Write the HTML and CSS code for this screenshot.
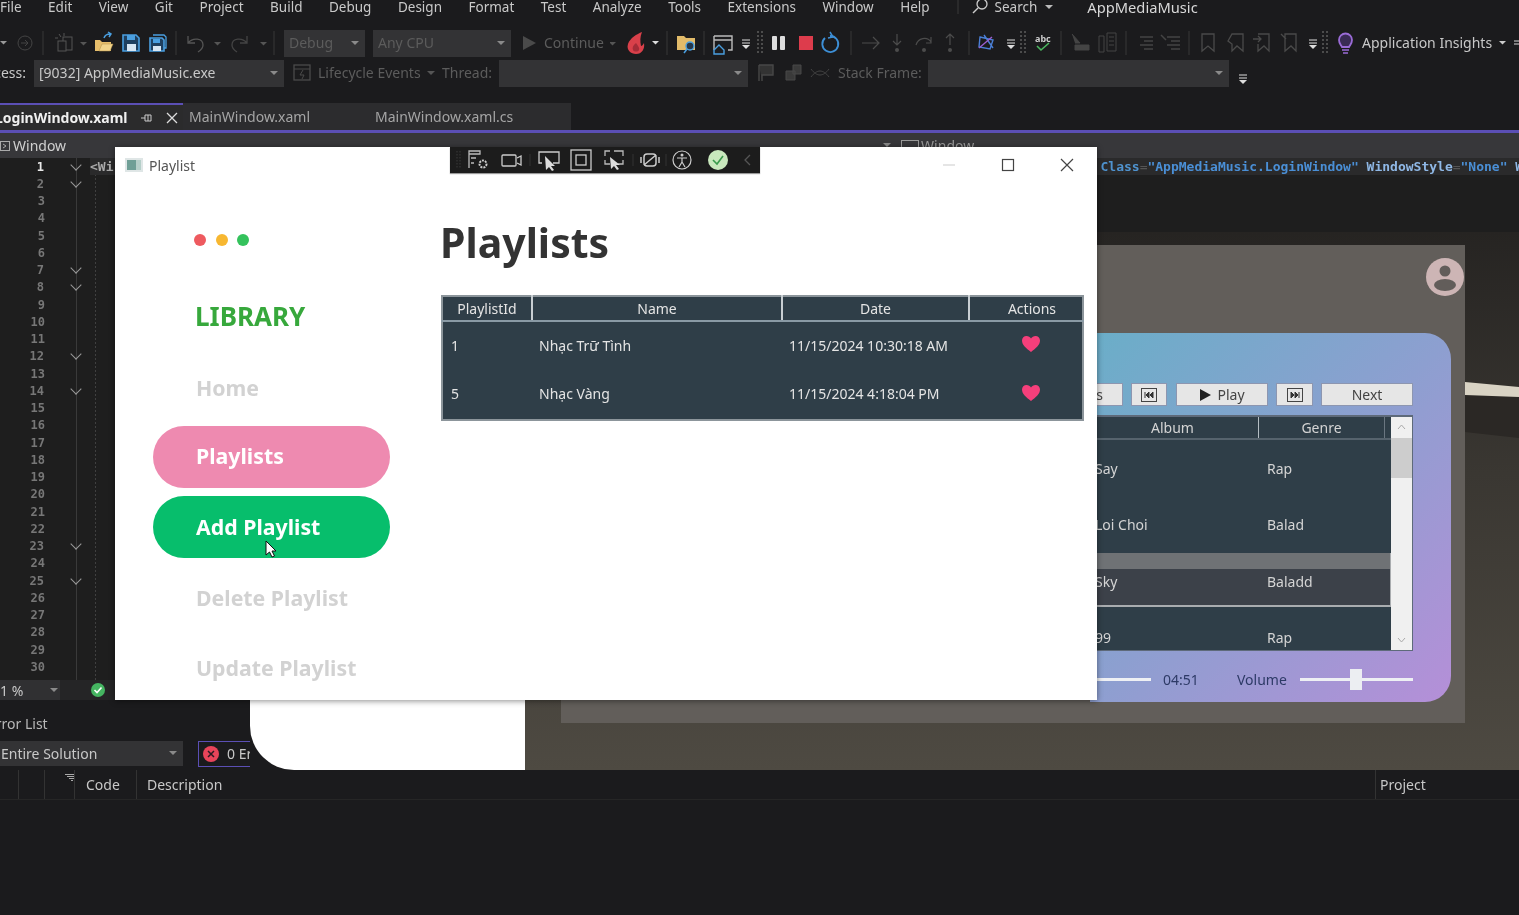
FILE: index.html
```html
<!DOCTYPE html>
<html lang="en">
<head>
    <meta charset="UTF-8">
    <meta name="viewport" content="width=device-width, initial-scale=1.0">
    <title>AppMediaMusic</title>
    <link rel="stylesheet" href="styles.css">
</head>
<body>
<div class="ide">
    <nav class="menubar">
        <span>File</span><span>Edit</span><span>View</span><span>Git</span><span>Project</span><span>Build</span><span>Debug</span><span>Design</span><span>Format</span><span>Test</span><span>Analyze</span><span>Tools</span><span>Extensions</span><span>Window</span><span>Help</span>
        <svg class="menu-search" width="36" height="16" viewBox="0 0 36 16"><path d="M1 0v14" stroke="#3a3a3a"/><path d="M21 8l-5 5" stroke="#ccc" stroke-width="1.5" fill="none"/><circle cx="25" cy="4" r="5" stroke="#ccc" stroke-width="1.3" fill="none"/></svg>
        <span class="menu-searchtext">Search</span>
        <svg class="caret-m" width="8" height="5" viewBox="0 0 8 5"><path d="M0 0h8L4 4z" fill="#bbb"/></svg>
        <span class="menu-app">AppMediaMusic</span>
    </nav>

    <div class="toolbar">
        <svg width="284" height="30" viewBox="0 0 284 30">
            <path d="M0 13h7l-3.5 3.5z" fill="#999"/>
            <circle cx="25" cy="15" r="7" stroke="#444" fill="none"/><path d="M21 15h7M25 12l3 3-3 3" stroke="#444" fill="none"/>
            <path d="M43 3v24M176 3v24M274 3v24" stroke="#383838"/>
            <path d="M59 6l2 3M64 5v3M55 10h3" stroke="#555" fill="none"/><rect x="63" y="9" width="9" height="13" stroke="#555" fill="none"/><rect x="58" y="13" width="8" height="10" stroke="#555" fill="#1c1c1e"/>
            <path d="M80 14h7l-3.5 3.5z" fill="#555"/>
            <path d="M95 12h5l2 2h9v9H95z" fill="#e6be6c"/><path d="M99 23l3-7h11l-3 7z" fill="#f2d48a" stroke="#b18f46" stroke-width=".5"/><path d="M104 10c1-3 3-4 6-4M108 4l3 2-2 3" stroke="#4a9fe0" stroke-width="1.5" fill="none"/>
            <path d="M123 7h13l3 3v13h-16z" fill="#1f3f5e" stroke="#4a9fe0" stroke-width="1.6"/><rect x="127" y="7" width="8" height="5" fill="#4a9fe0"/><rect x="127" y="16" width="9" height="7" fill="#d8e6f2"/>
            <path d="M153 7h11l2 2v11h-3" fill="none" stroke="#4a9fe0" stroke-width="1.3"/><path d="M150 10h12l2 2v11h-14z" fill="#1f3f5e" stroke="#4a9fe0" stroke-width="1.6"/><rect x="153" y="11" width="7" height="4" fill="#4a9fe0"/><rect x="153" y="18" width="8" height="5" fill="#d8e6f2"/>
            <path d="M188 8v7h7M188 15c5-6 15-5 15 2 0 3-2 5-5 7" stroke="#555" stroke-width="1.3" fill="none"/>
            <path d="M214 14h7l-3.5 3.5z" fill="#555"/>
            <path d="M247 8v7h-7M247 15c-5-6-15-5-15 2 0 3 2 5 5 7" stroke="#444" stroke-width="1.3" fill="none"/>
            <path d="M260 14h7l-3.5 3.5z" fill="#555"/>
        </svg>
        <div class="combo combo-debug dim">Debug<i class="caret"></i></div>
        <div class="combo combo-cpu dim">Any CPU<i class="caret"></i></div>
        <svg width="31" height="30" viewBox="511 0 31 30"><path d="M523 8l13 7-13 7z" fill="#4a4a4a"/></svg>
        <span class="tb-text dim tb-continue">Continue</span>
        <svg width="748" height="30" viewBox="610 0 748 30">
            <path d="M609 14h7l-3.5 3.5z" fill="#555"/>
            <path d="M642 4c-5 2-12 6-14 12-2 6 3 10 8 10 6 0 9-5 8-11-1 2-2 3-3 3-1-5-1-9 1-14z" fill="#d9404a"/><path d="M636 15c-3 2-4 5-3 7 1 2 5 2 6 0 1-2-1-4-3-7z" fill="#a52c38"/>
            <path d="M652 13h7l-3.5 3.5z" fill="#ddd"/>
            <path d="M667 3v24M704 3v24M851 3v24M969 3v24M1061 3v24M1126 3v24M1189 3v24" stroke="#383838"/>
            <path d="M677 8h7l2 2h9v12h-18z" fill="#e2bb6a"/><circle cx="690" cy="18" r="4" stroke="#4a9fe0" stroke-width="1.5" fill="#26384a"/><path d="M687 21l-3 4" stroke="#4a9fe0" stroke-width="1.6"/>
            <path d="M714 8h18v14h-4M714 22V8M714 12h18" stroke="#bbb" stroke-width="1.4" fill="none"/><path d="M714 22l5-5 5 5v4h-10z" fill="#1c1c1e" stroke="#4a9fe0" stroke-width="1.4"/>
            <path d="M742 12h8M742 15h8" stroke="#ddd"/><path d="M742 17h8l-4 4z" fill="#ddd"/>
            <path d="M758 3v24M762 3v24" stroke="#4c4c4c" stroke-width="2" stroke-dasharray="2 2"/>
            <rect x="772" y="8" width="5" height="14" rx="1" fill="#ddd"/><rect x="780" y="8" width="5" height="14" rx="1" fill="#ddd"/>
            <rect x="799" y="8" width="14" height="14" fill="#dd3c4c"/>
            <path d="M830 8a8 8 0 1 1-5 2" stroke="#3d8fd6" stroke-width="1.8" fill="none"/><path d="M830 4l3 5-5 1" stroke="#3d8fd6" stroke-width="1.5" fill="none"/>
            <path d="M862 15h16M873 9l6 6-6 6" stroke="#4c4c4c" stroke-width="1.2" fill="none"/>
            <path d="M897 6v11M893 13l4 4 4-4" stroke="#4c4c4c" stroke-width="1.2" fill="none"/><circle cx="897" cy="22" r="2" fill="#4c4c4c"/>
            <path d="M916 17c2-7 11-9 15-3M931 9v6h-5" stroke="#4c4c4c" stroke-width="1.2" fill="none"/><circle cx="924" cy="22" r="2" fill="#4c4c4c"/>
            <path d="M950 6v11M946 10l4-4 4 4" stroke="#4c4c4c" stroke-width="1.2" fill="none"/><circle cx="950" cy="22" r="2" fill="#4c4c4c"/>
            <path d="M980 9l13 3-3 9-11-2zM984 7l9 13" stroke="#4a7fd6" stroke-width="1.4" fill="none"/><path d="M979 20l13-11" stroke="#9a5fd0" stroke-width="1.4"/>
            <path d="M1007 12h8M1007 15h8" stroke="#ddd"/><path d="M1007 17h8l-4 4z" fill="#ddd"/>
            <path d="M1021 3v24M1025 3v24" stroke="#4c4c4c" stroke-width="2" stroke-dasharray="2 2"/>
            <text x="1035" y="14" class="abc">abc</text><path d="M1037 18l4 4 8-7" stroke="#4cb860" stroke-width="1.6" fill="none"/>
            <path d="M1072 6l8 9h-5M1075 22h14v-5h-14z" stroke="#444" fill="#444"/>
            <path d="M1099 8h5v16h-5zM1107 5h9v18h-9zM1109 9h5M1109 13h5M1109 17h5" stroke="#444" fill="none"/>
            <path d="M1140 9h13M1144 13h9M1140 17h13M1144 21h9" stroke="#444" stroke-width="1.5"/>
            <path d="M1167 9h13M1171 13h9M1167 17h13M1171 21h9M1161 7l5 5" stroke="#444" stroke-width="1.5"/>
            <path d="M1202 6h12v17l-6-5-6 5z" stroke="#4a4a4a" stroke-width="1.3" fill="none"/>
            <path d="M1232 6h11v17l-6-5-5 5v-7l-4-3z" stroke="#4a4a4a" stroke-width="1.3" fill="none"/>
            <path d="M1258 6h11v17l-5-5-6 5v-7M1253 11h8M1258 8l3 3-3 3" stroke="#4a4a4a" stroke-width="1.3" fill="none"/>
            <path d="M1285 6h11v17l-5-5-6 5zM1281 6l5 5" stroke="#4a4a4a" stroke-width="1.3" fill="none"/>
            <path d="M1309 12h8M1309 15h8" stroke="#ddd"/><path d="M1309 17h8l-4 4z" fill="#ddd"/>
            <path d="M1323 3v24M1327 3v24" stroke="#4c4c4c" stroke-width="2" stroke-dasharray="2 2"/>
            <path d="M1342 19c-1-2-3-3-3-7a6.500 6.500 0 0 1 13 0c0 4-2 5-3 7z" stroke="#9a6bd6" stroke-width="1.8" fill="#3a2b55"/><path d="M1342 22h7M1343 25h5" stroke="#9a6bd6" stroke-width="1.6"/>
        </svg>
        <span class="tb-text tb-insights">Application Insights</span>
        <svg width="23" height="30" viewBox="1496 0 23 30"><path d="M1499 13h7l-3.500 3.500z" fill="#ccc"/><path d="M1514 13h8M1514 16h8" stroke="#ddd"/></svg>
    </div>

    <div class="toolbar toolbar-debug">
        <span class="proc-label">Process:</span>
        <div class="combo combo-proc">[9032] AppMediaMusic.exe<i class="caret"></i></div>
        <svg width="34" height="30" viewBox="284 0 34 30"><rect x="294" y="7" width="16" height="15" stroke="#4a4a4a" stroke-width="1.3" fill="none"/><path d="M294 11h16M303 12l-3 5h4l-2 4" stroke="#4a4a4a" fill="none"/></svg>
        <span class="tb-text dim tb-life">Lifecycle Events</span>
        <svg width="14" height="30" viewBox="0 0 14 30"><path d="M2 13h8l-4 4z" fill="#555"/></svg>
        <span class="tb-text dim tb-thread">Thread:</span>
        <div class="combo combo-thread"><i class="caret"></i></div>
        <svg width="90" height="30" viewBox="748 0 90 30">
            <path d="M759 7h14v10h-11v6M759 7v16" stroke="#484848" stroke-width="1.4" fill="#333"/>
            <path d="M786 13h9v9h-9zM793 7h8v9h-8z" stroke="#484848" fill="#3a3a3a"/>
            <path d="M811 11c6 8 12 8 18 0M811 19c6-8 12-8 18 0" stroke="#444" fill="none"/>
        </svg>
        <span class="tb-text dim tb-stack">Stack Frame:</span>
        <div class="combo combo-frame"><i class="caret"></i></div>
        <svg class="tb-over" width="12" height="30" viewBox="0 0 12 30"><path d="M2 17h8M2 20h8" stroke="#ddd"/><path d="M2 22h8l-4 4z" fill="#ddd"/></svg>
    </div>

    <div class="tabs">
        <div class="tab tab-active">
            <span class="tab-title">LoginWindow.xaml</span>
            <svg width="12" height="12" viewBox="0 0 12 12"><path d="M0 6h4M4 3h6M4 9h6M4 3v6M10 3v6M7 3v6" stroke="#ccc" fill="none"/></svg>
            <svg width="12" height="12" viewBox="0 0 12 12"><path d="M1 1l10 10M11 1L1 11" stroke="#ddd" stroke-width="1.300"/></svg>
        </div>
        <div class="tab tab-main">MainWindow.xaml</div>
        <div class="tab tab-cs">MainWindow.xaml.cs</div>
    </div>

    <div class="subbar">
        <svg width="10" height="10" viewBox="0 0 10 10"><rect x=".5" y=".5" width="9" height="9" stroke="#aaa" fill="none"/><path d="M3 3l3 2-3 2" stroke="#aaa" fill="none"/></svg>
        <span class="subbar-left">Window</span>
        <svg class="subbar-caret" width="8" height="5" viewBox="0 0 8 5"><path d="M0 0h8L4 4z" fill="#888"/></svg>
        <svg width="18" height="12" viewBox="0 0 18 12"><rect x=".5" y=".5" width="17" height="11" stroke="#999" fill="none"/></svg>
        <span class="subbar-right">Window</span>
    </div>

    <div class="editor">
        <div class="gutter">
            <div class="ln current fold">1</div>
            <div class="ln fold">2</div>
            <div class="ln">3</div>
            <div class="ln">4</div>
            <div class="ln">5</div>
            <div class="ln">6</div>
            <div class="ln fold">7</div>
            <div class="ln fold">8</div>
            <div class="ln">9</div>
            <div class="ln">10</div>
            <div class="ln">11</div>
            <div class="ln fold">12</div>
            <div class="ln">13</div>
            <div class="ln fold">14</div>
            <div class="ln">15</div>
            <div class="ln">16</div>
            <div class="ln">17</div>
            <div class="ln">18</div>
            <div class="ln">19</div>
            <div class="ln">20</div>
            <div class="ln">21</div>
            <div class="ln">22</div>
            <div class="ln fold">23</div>
            <div class="ln">24</div>
            <div class="ln fold">25</div>
            <div class="ln">26</div>
            <div class="ln">27</div>
            <div class="ln">28</div>
            <div class="ln">29</div>
            <div class="ln">30</div>
        </div>
        <div class="code">
            <div class="code-line"><span class="tag">&lt;Wi</span><span class="code-rest"><b class="attr">Class</b><i>=</i><b class="val">"AppMediaMusic.LoginWindow"</b> <b class="attr2">WindowStyle</b><i>=</i><b class="val">"None"</b> <b class="attr2">WindowStartupLocation</b></span></div>
        </div>
    </div>

    <div class="statusbar">
        <div class="zoom-box">1 %<i class="caret"></i></div>
        <svg width="16" height="16" viewBox="0 0 16 16"><circle cx="8" cy="8" r="7" fill="#45b561"/><path d="M4.500 8l2.500 2.500 4.500-5" stroke="#fff" stroke-width="1.600" fill="none"/></svg>
    </div>

    <div class="errors">
        <div class="errors-title">Error List</div>
        <div class="errors-bar">
            <div class="combo combo-scope">Entire Solution<i class="caret"></i></div>
            <div class="err-count">
                <svg width="16" height="16" viewBox="0 0 16 16"><circle cx="8" cy="8" r="8" fill="#e8445a"/><path d="M5 5l6 6M11 5l-6 6" stroke="#2a1a22" stroke-width="1.500"/></svg>
                <span>0 Errors</span>
            </div>
        </div>
        <div class="errors-head">
            <span class="col col-a"></span><span class="col col-b"></span>
            <span class="col col-c"><svg width="9" height="7" viewBox="0 0 9 7"><path d="M0 .5h9M2 2.500h7M4 4.500h5M6 6.500h2" stroke="#aaa"/></svg></span>
            <span class="col col-code">Code</span>
            <span class="col col-desc">Description</span>
            <span class="col col-proj">Project</span>
        </div>
    </div>

    <!-- running preview behind the playlist window -->
    <div class="designer">
        <div class="designer-white"></div>
        <div class="photo">
            <svg class="photo-arm" width="54" height="56" viewBox="0 0 54 56"><path d="M0 12l54 3v41L0 50z" fill="#2b2825"/><path d="M0 0l54 5v10L0 13z" fill="#d9d3c4"/></svg>
            <div class="panel">
                <svg class="avatar" width="38" height="38" viewBox="0 0 38 38"><circle cx="19" cy="19" r="19" fill="#cdb5b5"/><circle cx="19" cy="13" r="5.500" fill="#625d5a"/><ellipse cx="19" cy="27" rx="11" ry="6" fill="#625d5a"/></svg>
                <div class="card">
                    <div class="player-btns">
                        <button class="pbtn pbtn-prev">Previous</button>
                        <button class="pbtn pbtn-icon"><svg width="16" height="14" viewBox="0 0 16 14"><rect x=".5" y=".5" width="15" height="13" stroke="#444" fill="none"/><path d="M4 4v6M8 4L5 7l3 3zM12 4L9 7l3 3z" stroke="#333" fill="#333"/></svg></button>
                        <button class="pbtn pbtn-wide"><svg width="12" height="12" viewBox="0 0 12 12"><path d="M1 0l11 6-11 6z" fill="#222"/></svg> Play</button>
                        <button class="pbtn pbtn-icon2"><svg width="16" height="14" viewBox="0 0 16 14"><rect x=".5" y=".5" width="15" height="13" stroke="#444" fill="none"/><path d="M12 4v6M8 4l3 3-3 3zM4 4l3 3-3 3z" stroke="#333" fill="#333"/></svg></button>
                        <button class="pbtn pbtn-wide">Next</button>
                    </div>
                    <div class="songs">
                        <div class="songs-main">
                            <div class="songs-head"><span class="sh-pad"></span><span class="sh-album">Album</span><span class="sh-genre">Genre</span></div>
                            <div class="song song-1"><span>Say</span><span>Rap</span></div>
                            <div class="song song-2"><span>Loi Choi</span><span>Balad</span></div>
                            <div class="song song-sel"><span>Sky</span><span>Baladd</span></div>
                            <div class="song song-4"><span>99</span><span>Rap</span></div>
                        </div>
                        <div class="scroll">
                            <svg width="21" height="21" viewBox="0 0 21 21"><path d="M7 12l3.500-4 3.500 4" stroke="#aaa" fill="none"/></svg>
                            <div class="scroll-thumb"></div>
                            <div class="scroll-fill"></div>
                            <svg width="21" height="21" viewBox="0 0 21 21"><path d="M7 9l3.500 4 3.500-4" stroke="#aaa" fill="none"/></svg>
                        </div>
                    </div>
                    <div class="player-foot">
                        <div class="track track-pos"></div>
                        <span class="time">04:51</span>
                        <span class="vol">Volume</span>
                        <div class="vol-slider"><div class="track track-a"></div><div class="thumb"></div><div class="track track-b"></div></div>
                    </div>
                </div>
            </div>
        </div>
    </div>

    <!-- the window being tested -->
    <div class="window">
        <div class="titlebar">
            <svg width="18" height="14" viewBox="0 0 18 14"><rect width="18" height="14" fill="#dfe6e6"/><rect x="2" y="2" width="9" height="10" fill="#6f9f96"/><rect x="11" y="2" width="5" height="10" fill="#b5cfc9"/></svg>
            <span class="win-name">Playlist</span>
            <div class="win-btns">
                <svg width="14" height="14" viewBox="0 0 14 14"><path d="M1 7h12" stroke="#ddd" stroke-width="1.500"/></svg>
                <svg width="14" height="14" viewBox="0 0 14 14"><rect x="1.500" y="1.500" width="11" height="11" stroke="#444" stroke-width="1.200" fill="none"/></svg>
                <svg width="14" height="14" viewBox="0 0 14 14"><path d="M1 1l12 12M13 1L1 13" stroke="#444" stroke-width="1.200"/></svg>
            </div>
        </div>
        <div class="win-body">
            <aside class="sidebar">
                <div class="dots"><i class="dot dot-r"></i><i class="dot dot-y"></i><i class="dot dot-g"></i></div>
                <div class="library">LIBRARY</div>
                <div class="nav">
                    <a class="nav-item">Home</a>
                    <a class="nav-item nav-pink">Playlists</a>
                    <a class="nav-item nav-green">Add Playlist</a>
                    <a class="nav-item">Delete Playlist</a>
                    <a class="nav-item">Update Playlist</a>
                </div>
            </aside>
            <main class="content">
                <h1>Playlists</h1>
                <table class="grid">
                    <colgroup><col class="c1"><col class="c2"><col class="c3"><col class="c4"></colgroup>
                    <tr><th>PlaylistId</th><th>Name</th><th>Date</th><th>Actions</th></tr>
                    <tr><td class="id">1</td><td>Nhạc Trữ Tình</td><td>11/15/2024 10:30:18 AM</td><td class="act"><svg width="18" height="16" viewBox="0 0 18 16"><path d="M9 16C4 12 0 9 0 4.500 0 2 2 0 4.500 0 6.500 0 8 1 9 2.500 10 1 11.500 0 13.500 0 16 0 18 2 18 4.500 18 9 14 12 9 16z" fill="#f53f7b"/></svg></td></tr>
                    <tr><td class="id">5</td><td>Nhạc Vàng</td><td>11/15/2024 4:18:04 PM</td><td class="act"><svg width="18" height="16" viewBox="0 0 18 16"><path d="M9 16C4 12 0 9 0 4.500 0 2 2 0 4.500 0 6.500 0 8 1 9 2.500 10 1 11.500 0 13.500 0 16 0 18 2 18 4.500 18 9 14 12 9 16z" fill="#f53f7b"/></svg></td></tr>
                </table>
            </main>
        </div>
        <svg class="pointer" width="12" height="18" viewBox="0 0 12 18"><path d="M1 1v14l3.500-3 2.500 5 2.500-1-2.500-5H11z" fill="#fff" stroke="#111"/></svg>

        <div class="debug-tools">
            <svg width="310" height="26" viewBox="450 147 310 26">
                <path d="M457 151v18M460 151v18" stroke="#3a3a3a" stroke-dasharray="1.500 1.500"/>
                <path d="M469 168v-17h11v3h-11M471 158h5M471 163h3" stroke="#bbb" stroke-width="1.300" fill="none"/><circle cx="483" cy="164" r="3.500" stroke="#ccc" stroke-width="2" stroke-dasharray="2 1" fill="none"/>
                <rect x="502" y="155" width="14" height="11" rx="1" stroke="#ccc" stroke-width="1.300" fill="none"/><path d="M517 158l4-2v9l-4-2" stroke="#ccc" stroke-width="1.300" fill="none"/>
                <path d="M530 154v12M633 154v12M666 154v12" stroke="#333"/>
                <path d="M542 163h-3v-11h20v11h-6" stroke="#ccc" stroke-width="1.300" fill="none"/><path d="M545 156l1 14 3-3 3 4 2-1-3-4h4z" fill="#ddd"/>
                <rect x="571" y="150" width="20" height="20" stroke="#ccc" stroke-width="1.300" fill="none"/><rect x="576" y="155" width="10" height="10" stroke="#ccc" stroke-width="1.300" fill="none"/>
                <path d="M605 156v-5h5M614 151h9v5M623 160v4h-5M610 164h-5v-4" stroke="#bbb" stroke-width="1.300" fill="none"/><path d="M610 157l1 12 3-3 3 4 2-1-3-4h4z" fill="#ddd"/>
                <rect x="644" y="154" width="12" height="12" rx="3" stroke="#ccc" stroke-width="1.500" fill="none"/><path d="M644 165l12-10M641 157v6M659 157v6" stroke="#ccc" stroke-width="1.500"/>
                <circle cx="682" cy="160" r="9" stroke="#ccc" stroke-width="1.200" fill="none"/><circle cx="682" cy="155" r="1.500" fill="#ccc"/><path d="M677 158h10M682 158v4l-3 5M682 162l3 5" stroke="#ccc" stroke-width="1.200" fill="none"/>
                <circle cx="718" cy="160" r="10" fill="#c9e8bd"/><path d="M713 160l4 4 6-8" stroke="#3a9a4c" stroke-width="1.600" fill="none"/>
                <path d="M750 155l-5 5 5 5" stroke="#555" stroke-width="1.300" fill="none"/>
            </svg>
        </div>
    </div>
</div>
</body>
</html>
```

FILE: styles.css
```css
* {
    box-sizing: border-box;
}

html, body {
    margin: 0;
    padding: 0;
    height: 100%;
    overflow: hidden;
}

body {
    font-family: 'Noto Sans', 'Liberation Sans', sans-serif;
    background-color: #1b1b1d;
}

svg {
    display: block;
    flex: none;
}

.ide {
    position: relative;
    width: 1519px;
    height: 915px;
    overflow: hidden;
    display: flex;
    flex-direction: column;
    background-color: #1b1b1d;
    color: #c8c8c8;
    font-size: 14px;
    filter: blur(0.5px);
}

/* menu */
.menubar {
    display: flex;
    align-items: flex-start;
    gap: 26.5px;
    height: 28px;
    line-height: 14px;
    color: #c9c9c9;
    font-size: 13.5px;
}

.menu-search {
    margin-left: 1px;
    margin-right: -27px;
}

.menu-searchtext {
    margin-left: 2px;
}

.caret-m {
    margin: 5px 0 0 -19px;
}

.menu-app {
    margin-left: 8px;
    font-size: 14.7px;
    color: #d8d8d8;
}

/* toolbars */
.toolbar {
    display: flex;
    align-items: center;
    height: 30px;
    white-space: nowrap;
}

.abc {
    font-size: 9px;
    font-weight: 700;
    fill: #ccc;
}

.combo {
    display: flex;
    align-items: center;
    justify-content: space-between;
    flex: none;
    height: 27px;
    padding: 0 6px 1px 5px;
    background-color: #333335;
    color: #c8c8c8;
}

.dim {
    color: #5c5c5c;
}

.caret {
    width: 0;
    height: 0;
    border-left: 4px solid transparent;
    border-right: 4px solid transparent;
    border-top: 4px solid #8a8a8a;
}

.combo-debug { width: 81px; }
.combo-cpu { width: 138px; margin-left: 8px; }
.combo-proc { width: 250px; }
.combo-thread { width: 249px; justify-content: flex-end; }
.combo-frame { width: 301px; justify-content: flex-end; }

.tb-text {
    flex: none;
    margin-top: -2px;
}

.tb-continue { width: 68px; padding-left: 2px; }
.tb-insights { width: 134px; margin-left: 4px; color: #c8c8c8; }
.tb-life { width: 107px; }
.tb-thread { width: 57px; margin-left: 3px; }
.tb-stack { width: 90px; }
.tb-over { margin-left: 8px; }

.proc-label {
    flex: none;
    width: 26px;
    margin: -2px 8px 0 0;
    display: flex;
    justify-content: flex-end;
}

/* tabs */
.tabs {
    display: flex;
    height: 30px;
    margin-top: 15px;
    border-bottom: 3px solid #5b4fb5;
}

.tab {
    display: flex;
    align-items: center;
    padding-left: 6px;
    background-color: #2c2c2e;
    color: #a5a5a5;
    font-size: 14px;
}

.tab-active {
    width: 183px;
    gap: 13px;
    padding-left: 0;
    background-color: #2b2b2c;
    border-top: 2px solid #5b4fb5;
    color: #f0f0f0;
    font-weight: 700;
    overflow: hidden;
}

.tab-title {
    margin-left: -5px;
    white-space: nowrap;
}

.tab-main { width: 186px; }
.tab-cs { width: 202px; }

.subbar {
    display: flex;
    align-items: center;
    height: 25px;
    background-color: #37373a;
    font-size: 14px;
}

.subbar-left {
    margin-left: 3px;
    color: #d0d0d0;
}

.subbar-caret {
    margin-left: 817px;
}

.subbar-caret + svg {
    margin-left: 10px;
}

.subbar-right {
    margin-left: 2px;
    color: #999;
}

/* editor */
.editor {
    display: flex;
    height: 522px;
    background-color: #1e1e1e;
}

.gutter {
    flex: none;
    width: 90px;
    background-image: linear-gradient(#3a3a3a, #3a3a3a);
    background-size: 1px 100%;
    background-position: 76px 0;
    background-repeat: no-repeat;
    font-family: 'DejaVu Sans Mono', monospace;
    font-size: 12px;
    font-weight: 700;
    color: #777;
}

.ln {
    display: flex;
    align-items: center;
    justify-content: flex-end;
    width: 45px;
    height: 17.25px;
}

.ln.current {
    color: #e8e8e8;
}

.fold::after {
    content: "";
    flex: none;
    width: 7px;
    height: 7px;
    margin: -4px -35px 0 28px;
    border-right: 1.5px solid #999;
    border-bottom: 1.5px solid #999;
    transform: rotate(45deg);
}

.code {
    flex: 1;
    min-width: 0;
    background-image: repeating-linear-gradient(#404040 0 2px, transparent 2px 4px);
    background-size: 1px 100%;
    background-position: 5px 0;
    background-repeat: no-repeat;
    font-family: 'DejaVu Sans Mono', monospace;
    font-size: 13px;
}

.code-line {
    display: flex;
    align-items: center;
    height: 17px;
    overflow: hidden;
    white-space: nowrap;
    background-color: #2a2a2b;
}

.tag {
    color: #aaa;
    font-weight: 700;
}

.code-rest {
    margin-left: 987px;
}

.code-rest i {
    font-style: normal;
    color: #555;
}

.attr { color: #4f93cf; }
.attr2 { color: #8fb8e6; }
.val { color: #4a8fd6; }

.statusbar {
    display: flex;
    align-items: center;
    height: 20px;
    background-color: #252526;
}

.zoom-box {
    display: flex;
    align-items: center;
    justify-content: space-between;
    width: 60px;
    height: 20px;
    padding-right: 2px;
    margin-right: 30px;
    background-color: #303032;
}

/* error list */
.errors {
    height: 97px;
}

.errors-title {
    height: 40px;
    padding-top: 14px;
    line-height: 20px;
    margin-left: -12px;
    color: #b8b8b8;
}

.errors-bar {
    display: flex;
    align-items: center;
    height: 27px;
}

.combo-scope {
    width: 183px;
    height: 25px;
    padding-left: 1px;
}

.err-count {
    display: flex;
    align-items: center;
    gap: 8px;
    width: 52px;
    height: 26px;
    margin-left: 15px;
    padding-left: 4px;
    border: 1px solid #5b4fb5;
    border-right: 0;
    overflow: hidden;
    white-space: nowrap;
}

.errors-head {
    display: flex;
    align-items: center;
    height: 30px;
    margin-top: 3px;
    border-bottom: 1px solid #262626;
}

.col {
    display: flex;
    height: 100%;
    align-items: center;
    border-right: 1px solid #333;
    flex: none;
}

.col-a { width: 19px; }
.col-b { width: 26px; }
.col-c { width: 30px; align-items: flex-start; justify-content: flex-end; padding: 4px 0 0; }
.col-code { width: 62px; padding-left: 11px; }
.col-desc { width: 1239px; padding-left: 10px; }
.col-proj { border-right: 0; padding-left: 4px; }

/* the app running behind */
.designer {
    position: absolute;
    left: 250px;
    top: 232px;
    right: 0;
    height: 538px;
    display: flex;
}

.designer-white {
    flex: none;
    width: 275px;
    background-color: #fff;
    border-bottom-left-radius: 44px;
}

.photo {
    position: relative;
    flex: 1;
    background: linear-gradient(#262422, #3a3732 45%, #4e4a42);
    padding: 13px 54px 47px 36px;
}

.photo-arm {
    position: absolute;
    right: 0;
    top: 150px;
}

.panel {
    display: flex;
    flex-direction: column;
    align-items: flex-end;
    height: 100%;
    background-color: #625e5a;
}

.avatar {
    margin: 13px 1px 0 0;
}

.card {
    display: flex;
    flex-direction: column;
    align-items: flex-end;
    width: 361px;
    height: 369px;
    margin: 37px 14px 0 0;
    padding: 50px 38px 0 0;
    border-radius: 0 26px 26px 0;
    background: linear-gradient(135deg, #6aaec8, #8d9fd0 50%, #b58fd8);
}

.player-btns {
    display: flex;
    gap: 8px;
    height: 23px;
}

.pbtn {
    flex: none;
    display: flex;
    align-items: center;
    justify-content: center;
    gap: 6px;
    height: 23px;
    padding: 0;
    background-color: #e6e6e6;
    border: 1px solid #8d96b0;
    color: #444;
    font-family: inherit;
    font-size: 14px;
}

.pbtn-prev { width: 74px; justify-content: flex-end; padding-right: 19px; }
.pbtn-icon { width: 36px; margin-right: 1px; }
.pbtn-icon2 { width: 37px; }
.pbtn-wide { width: 92px; }

.songs {
    display: flex;
    flex: none;
    width: 413px;
    height: 236px;
    margin-top: 9px;
    padding: 2px 1px 1px 0;
    background-color: #5e6a7a;
}

.songs-main {
    flex: 1;
    min-width: 0;
    background-color: #2f3e48;
    color: #d4d4d4;
    font-size: 14px;
}

.songs-head {
    display: flex;
    height: 23px;
    line-height: 22px;
    text-align: center;
    border-bottom: 2px solid #56636d;
}

.sh-pad { flex: none; width: 87px; }
.sh-album { flex: none; width: 172px; border-right: 1px solid #b5bec4; }
.sh-genre { flex: none; width: 126px; border-right: 1px solid #6a7680; }

.song {
    display: grid;
    grid-template-columns: 172px 1fr;
    align-items: center;
    padding-left: 95px;
    white-space: nowrap;
}

.song-1 { height: 57px; }
.song-2 { height: 56px; padding-bottom: 2px; }
.song-4 { height: 44px; padding-top: 16px; }

.song-sel {
    height: 54px;
    padding-top: 5px;
    border-bottom: 2px solid #a9acaf;
    border-right: 1px solid #a9acaf;
    background: linear-gradient(#6f7275 16px, #3c4149 16px);
}

.scroll {
    flex: none;
    display: flex;
    flex-direction: column;
    width: 21px;
    background-color: #f0f0f0;
}

.scroll-thumb {
    height: 40px;
    background-color: #cdcdcd;
}

.scroll-fill {
    flex: 1;
}

.player-foot {
    display: flex;
    align-items: center;
    height: 22px;
    margin-top: 17px;
    color: #2d3a66;
    font-size: 14px;
}

.track {
    height: 3px;
    background-color: #eef0f4;
}

.track-pos { width: 55px; }
.time { margin-left: 12px; width: 38px; }
.vol { margin-left: 36px; width: 63px; }

.vol-slider {
    display: flex;
    align-items: center;
}

.track-a { width: 50px; }
.track-b { width: 51px; }

.thumb {
    width: 12px;
    height: 21px;
    background-color: #eceef2;
}

/* playlist window */
.window {
    position: absolute;
    left: 115px;
    top: 147px;
    width: 982px;
    height: 553px;
    background-color: #fff;
    box-shadow: 0 1px 6px rgba(0, 0, 0, 0.45);
    color: #222;
}

.titlebar {
    display: flex;
    align-items: center;
    height: 36px;
    padding-left: 10px;
}

.win-name {
    margin-left: 6px;
    font-size: 14px;
    color: #555;
}

.win-btns {
    display: flex;
    gap: 45px;
    margin-left: auto;
    margin-right: 23px;
}

.win-body {
    display: flex;
}

.sidebar {
    flex: none;
    width: 326px;
    padding-left: 38px;
}

.dots {
    display: flex;
    gap: 9.5px;
    margin: 51px 0 0 41px;
}

.dot {
    width: 12px;
    height: 12px;
    border-radius: 50%;
}

.dot-r { background-color: #ee5a5f; }
.dot-y { background-color: #f7b731; }
.dot-g { background-color: #34c25c; }

.library {
    margin: 52px 0 22px 42px;
    line-height: 36px;
    font-size: 26px;
    font-weight: 700;
    color: #37a83c;
}

.nav {
    display: flex;
    flex-direction: column;
    gap: 8px;
}

.nav-item {
    display: flex;
    align-items: center;
    width: 237px;
    height: 62px;
    padding-left: 43px;
    border-radius: 31px;
    font-size: 21.3px;
    font-weight: 700;
    color: #d2d2d2;
}

.nav-pink {
    padding-bottom: 3px;
    background-color: #ee8ab0;
    color: #fff;
}

.nav-green {
    padding-bottom: 1px;
    background-color: #07be6c;
    color: #fff;
}

.content {
    flex: 1;
    min-width: 0;
}

h1 {
    margin: 34px 0 28px -1px;
    line-height: 50px;
    font-size: 41px;
    font-weight: 700;
    color: #333;
}

.grid {
    width: 643px;
    table-layout: fixed;
    border-collapse: collapse;
    background-color: #2f3e48;
    border: 2px solid #8c959b;
    color: #e4e4e4;
    font-size: 14px;
}

.c1 { width: 90px; }
.c2 { width: 250px; }
.c3 { width: 187px; }

.grid th {
    height: 25px;
    padding: 0;
    font-weight: 400;
    border-bottom: 2px solid #8a9aa5;
    border-right: 2px solid #c8ced2;
}

.grid th:last-child {
    padding-left: 12px;
    border-right: 0;
}

.grid td {
    height: 49.5px;
    padding: 0 0 2px 7px;
}

.grid .id {
    padding-left: 8px;
}

.grid .act svg {
    margin: 0 0 2px 46px;
}

.pointer {
    position: absolute;
    left: 150px;
    top: 393px;
}

.debug-tools {
    position: absolute;
    left: 335px;
    top: 0;
    width: 310px;
    height: 26px;
    background-color: #1c1c1c;
    box-shadow: 0 1px 1px rgba(0, 0, 0, 0.4);
}
```
